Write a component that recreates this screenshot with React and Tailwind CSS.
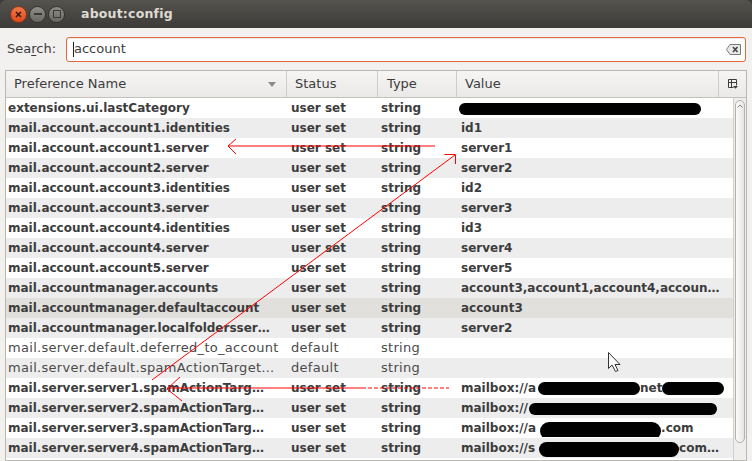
import React from "react";

const Blob = ({ className }) => (
  <span className={"inline-block rounded-full bg-black align-middle " + className} />
);

const rows = [
  { name: "extensions.ui.lastCategory", status: "user set", value: <Blob className="w-[242px] h-[12px] -ml-[2px]" /> },
  { name: "mail.account.account1.identities", status: "user set", value: "id1" },
  { name: "mail.account.account1.server", status: "user set", value: "server1" },
  { name: "mail.account.account2.server", status: "user set", value: "server2" },
  { name: "mail.account.account3.identities", status: "user set", value: "id2" },
  { name: "mail.account.account3.server", status: "user set", value: "server3" },
  { name: "mail.account.account4.identities", status: "user set", value: "id3" },
  { name: "mail.account.account4.server", status: "user set", value: "server4" },
  { name: "mail.account.account5.server", status: "user set", value: "server5" },
  { name: "mail.accountmanager.accounts", status: "user set", value: "account3,account1,account4,accoun…" },
  { name: "mail.accountmanager.defaultaccount", status: "user set", value: "account3", selected: true },
  { name: "mail.accountmanager.localfoldersser…", status: "user set", value: "server2" },
  { name: "mail.server.default.deferred_to_account", status: "default", value: "", light: true },
  { name: "mail.server.default.spamActionTarget…", status: "default", value: "", light: true },
  {
    name: "mail.server.server1.spamActionTarg…",
    status: "user set",
    value: (
      <>
        mailbox://a
        <Blob className="w-[102px] h-[13px] ml-[2px]" />
        net
        <Blob className="w-[62px] h-[13px] -ml-[1px]" />
      </>
    ),
  },
  {
    name: "mail.server.server2.spamActionTarg…",
    status: "user set",
    value: (
      <>
        mailbox://
        <Blob className="w-[188px] h-[12px] ml-[1px]" />
      </>
    ),
  },
  {
    name: "mail.server.server3.spamActionTarg…",
    status: "user set",
    value: (
      <>
        mailbox://a
        <Blob className="w-[121px] h-[18px] ml-[4px] translate-y-[3px]" />
        .com
      </>
    ),
  },
  {
    name: "mail.server.server4.spamActionTarg…",
    status: "user set",
    value: (
      <>
        mailbox://s
        <Blob className="w-[140px] h-[15px] ml-[4px] translate-y-[1px]" />
        com…
      </>
    ),
  },
  { name: "mail.server.server5.spamActionTarg…", status: "user set", value: "mailbox://" },
];

const TitleButton = ({ kind }) => {
  if (kind === "close") {
    return (
      <div className="w-[17px] h-[17px] rounded-full bg-linear-to-b from-[#f07746] to-[#df4a1a] border border-[#8c3113] flex items-center justify-center">
        <svg width="7" height="7" viewBox="0 0 7 7">
          <path d="M1 1L6 6M6 1L1 6" stroke="#3a1a0c" strokeWidth="1.6" />
        </svg>
      </div>
    );
  }
  return (
    <div className="w-[17px] h-[17px] rounded-full bg-linear-to-b from-[#8f8d87] to-[#6a6863] border border-[#34332f] flex items-center justify-center">
      {kind === "min" ? (
        <div className="w-[8px] h-[2px] bg-[#3a3935]" />
      ) : (
        <div className="w-[8px] h-[8px] border-[1.5px] border-[#3a3935]" />
      )}
    </div>
  );
};

const App = () => {
  return (
    <div className="relative w-[752px] h-[461px] overflow-hidden bg-[#3c3b37] font-['DejaVu_Sans',sans-serif] text-[#3c3c3c]">
      {/* title bar */}
      <div className="h-[28px] flex items-center rounded-t-[6px] bg-linear-to-b from-[#55534e] to-[#3c3b37] pl-[10px]">
        <div className="flex items-center gap-[2px]">
          <TitleButton kind="close" />
          <TitleButton kind="min" />
          <TitleButton kind="max" />
        </div>
        <div className="ml-[16px] text-[12.5px] font-bold text-[#dfdbd2] tracking-[0.2px]">about:config</div>
      </div>

      <div className="bg-[#f2f1f0] h-[433px] flex flex-col">
        {/* search */}
        <div className="h-[42px] flex items-center">
          <div className="w-[66px] pl-[7px] text-[13px] text-[#3c3c3c]">
            Sea<span className="underline underline-offset-2">r</span>ch:
          </div>
          <div className="flex-1 mr-[6px] h-[25px] rounded-[3px] border border-[#e3693a] bg-white flex items-center pl-[6px] pr-[4px] shadow-[inset_0_1px_1px_rgba(0,0,0,0.08)]">
            <div className="w-[1px] h-[15px] bg-[#222]" />
            <div className="text-[13px] text-[#3c3c3c] flex-1">account</div>
            <svg width="15" height="11" viewBox="0 0 15 11">
              <path d="M4 0.5H14.5V10.5H4L0.5 5.5Z" fill="#e8e8e8" stroke="#7a7a7a" strokeWidth="1" />
              <path d="M7 3L11.5 8M11.5 3L7 8" stroke="#444" strokeWidth="1.6" />
            </svg>
          </div>
        </div>

        {/* table */}
        <div className="mx-[5px] flex-1 border border-[#b9b6b0] bg-white flex flex-col overflow-hidden">
          <div className="h-[27px] flex text-[13px] bg-linear-to-b from-[#f6f5f4] to-[#eae9e7] border-b border-[#c4c1bc] shrink-0">
            <div className="w-[281px] border-r border-[#cfccc7] flex items-center pl-[8px] pr-[10px]">
              <span className="flex-1">Preference Name</span>
              <svg width="8" height="5" viewBox="0 0 8 5">
                <path d="M0 0H8L4 5Z" fill="#8d8b87" />
              </svg>
            </div>
            <div className="w-[91px] border-r border-[#cfccc7] flex items-center pl-[8px]">Status</div>
            <div className="w-[79px] border-r border-[#cfccc7] flex items-center pl-[9px]">Type</div>
            <div className="w-[262px] border-r border-[#cfccc7] flex items-center pl-[8px]">Value</div>
            <div className="flex-1 flex items-center justify-center">
              <svg width="10" height="10" viewBox="0 0 10 10">
                <path d="M0.5 0.5H8.5V6.5M0.5 0.5V8.5H5.5M0.5 3.5H8.5M3.5 0.5V8.5" stroke="#3c3c3c" strokeWidth="1" fill="none" />
                <path d="M5 7H10L7.5 9.8Z" fill="#3c3c3c" />
              </svg>
            </div>
          </div>

          <div className="flex flex-1 overflow-hidden">
            <div className="flex-1 flex flex-col">
              {rows.map((r, i) => (
                <div
                  key={i}
                  className={
                    "h-[20px] shrink-0 flex items-center whitespace-nowrap " +
                    (r.selected ? "bg-[#e1e0dd] " : i % 2 === 1 ? "bg-[#ededed] " : "bg-white ") +
                    (r.light
                      ? "text-[13px] font-normal tracking-[0.3px] text-[#4a4a4a]"
                      : "text-[12px] font-bold text-[#3c3c3c]")
                  }
                >
                  <div className="w-[281px] pl-[2px] overflow-hidden">{r.name}</div>
                  <div className="w-[91px] pl-[4px] overflow-hidden">{r.status}</div>
                  <div className="w-[79px] pl-[3px] overflow-hidden">string</div>
                  <div className="flex-1 pl-[4px] overflow-hidden">{r.value}</div>
                </div>
              ))}
            </div>
            {/* scrollbar */}
            <div className="w-[13px] shrink-0 border-l border-[#d3d0cb] bg-[#efeeec] pt-[2px] flex justify-center">
              <div className="w-[10px] h-[343px] rounded-full border border-[#b5b2ad] bg-linear-to-r from-[#fbfbfa] to-[#e6e5e3] flex justify-center pt-[3px]">
                <svg width="6" height="4" viewBox="0 0 6 4">
                  <path d="M0.5 3.5L3 1L5.5 3.5" stroke="#8a8884" strokeWidth="1" fill="none" />
                </svg>
              </div>
            </div>
          </div>
        </div>
      </div>

      {/* red annotation arrows and mouse pointer drawn over the screenshot */}
      <svg className="absolute left-0 top-0 pointer-events-none" width="752" height="461" viewBox="0 0 752 461">
        <g stroke="#ff0000" strokeWidth="1" fill="none">
          <path d="M228 146H435" />
          <path d="M228 146L236 139M228 146L236 154" />
          <path d="M152 380L455 155" />
          <path d="M444.5 154.5H455.5V164" />
          <path d="M167 388H362" />
          <path d="M362 388H449" strokeDasharray="4 2" />
          <path d="M167 389L180 377M167 389L182 401" />
        </g>
        <path d="M608.5 352.5V368.5L612 365L615.5 371.5L618 370.5L615 364.5H620Z" fill="#fafafa" stroke="#333" strokeWidth="1" strokeLinejoin="round" />
      </svg>
    </div>
  );
};

export default App;
